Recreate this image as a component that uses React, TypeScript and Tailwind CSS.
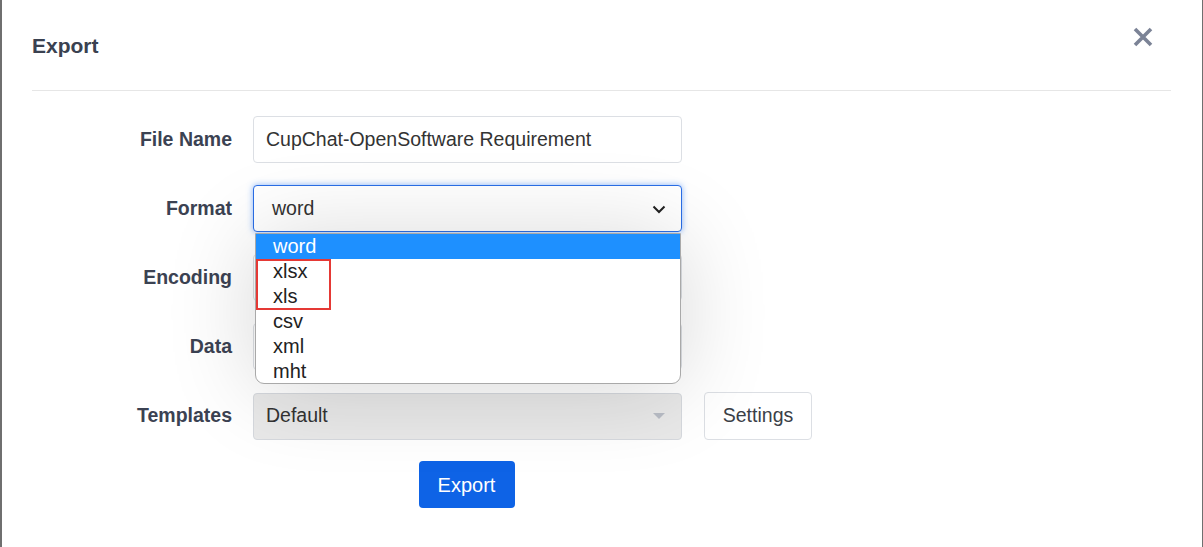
import React from "react";

const rotulo = "w-[251px] text-right pr-[21px] text-[19.5px] font-bold text-[#3b4252]";
const campo = "w-[429px] h-[47px] rounded border border-[#dcdfe4] bg-white px-3 text-[19.5px] text-[#333] flex items-center";

const formatos = ["word", "xlsx", "xls", "csv", "xml", "mht"];

export default function App() {
  return (
    <div
      className="w-[1203px] h-[547px] bg-white border-l-2 border-r border-[#6f6f6f] relative overflow-hidden"
      style={{ fontFamily: '"Liberation Sans", Arial, sans-serif' }}
    >
      {/* Cabeçalho */}
      <header className="ml-[30px] mr-[31px] h-[91px] border-b border-[#e6e6e6] flex items-center justify-between">
        <h2 className="text-[21px] font-bold text-[#3a4150] pt-[2px]">Export</h2>
        <button className="mr-[17px] mb-[16px] text-[#7b8396]">
          <svg width="22" height="22" viewBox="0 0 22 22">
            <path d="M3 3 L19 19 M19 3 L3 19" stroke="currentColor" strokeWidth="3.6" strokeLinecap="butt" />
          </svg>
        </button>
      </header>

      {/* Formulário */}
      <main className="pt-[25px] flex flex-col gap-[22px]">
        <div className="flex items-center">
          <label className={rotulo}>File Name</label>
          <div className={campo}>CupChat-OpenSoftware Requirement</div>
        </div>

        <div className="flex items-center">
          <label className={rotulo}>Format</label>
          <div className="w-[429px] h-[47px] rounded border border-[#2a6ee6] bg-white pl-[18px] pr-[14px] text-[19.5px] text-[#333] flex items-center justify-between shadow-[0_0_6px_rgba(40,120,245,0.55)]">
            <span>word</span>
            <svg width="16" height="16" viewBox="0 0 16 16" className="text-[#222]">
              <path d="M2.5 5.5 L8 11 L13.5 5.5" fill="none" stroke="currentColor" strokeWidth="2" />
            </svg>
          </div>
        </div>

        <div className="flex items-center">
          <label className={rotulo}>Encoding</label>
          <div className={campo} />
        </div>

        <div className="flex items-center">
          <label className={rotulo}>Data</label>
          <div className={campo} />
        </div>

        <div className="flex items-center">
          <label className={rotulo}>Templates</label>
          <div className="w-[429px] h-[47px] rounded border border-[#d6d9de] bg-[#e9e9e9] pl-3 pr-[16px] text-[19.5px] text-[#333] flex items-center justify-between">
            <span>Default</span>
            <svg width="12" height="7" viewBox="0 0 12 7">
              <path d="M0 0 H12 L6 6 Z" fill="#b9bdc6" />
            </svg>
          </div>
          <button className="ml-[22px] w-[108px] h-[48px] rounded border border-[#dcdfe4] bg-white text-[19.5px] text-[#3b3f47]">
            Settings
          </button>
        </div>

        <div className="flex -mt-[1px]">
          <div className="w-[251px]" />
          <div className="w-[429px] flex justify-center">
            <button className="w-[96px] h-[47px] rounded bg-[#0e63e6] text-white text-[20px] -ml-[2px]">Export</button>
          </div>
        </div>
      </main>

      {/* Lista aberta do select */}
      <ul className="absolute left-[253px] top-[233px] w-[426px] h-[151px] bg-white border border-[#a9a9a9] rounded-b-[9px] overflow-hidden shadow-[0_4px_90px_rgba(0,0,0,0.16)] text-[20px] text-[#222]">
        {formatos.map((f, i) => (
          <li
            key={f}
            className={
              i === 0
                ? "h-[25px] pl-[17px] leading-[24px] bg-[#1e90ff] text-white"
                : "h-[25px] pl-[17px] leading-[24px]"
            }
          >
            {f}
          </li>
        ))}
      </ul>

      {/* Destaque vermelho */}
      <div className="absolute left-[254px] top-[259px] w-[75px] h-[51px] border-2 border-[#e53935]" />
    </div>
  );
}
